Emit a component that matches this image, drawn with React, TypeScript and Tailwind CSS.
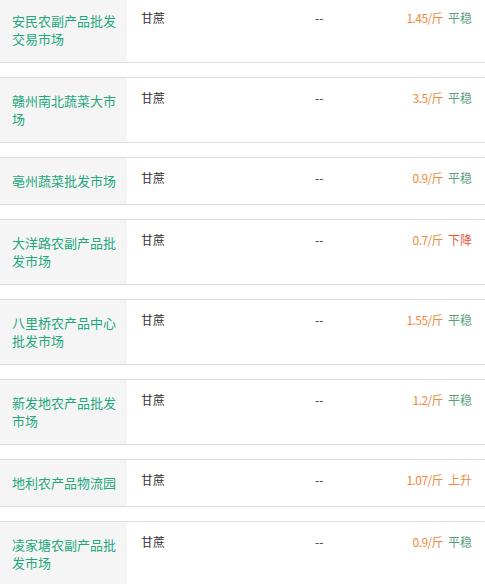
const rows = [
  { market: "安民农副产品批发交易市场", price: "1.45/斤", trend: "平稳" },
  { market: "赣州南北蔬菜大市场", price: "3.5/斤", trend: "平稳" },
  { market: "亳州蔬菜批发市场", price: "0.9/斤", trend: "平稳" },
  { market: "大洋路农副产品批发市场", price: "0.7/斤", trend: "下降" },
  { market: "八里桥农产品中心批发市场", price: "1.55/斤", trend: "平稳" },
  { market: "新发地农产品批发市场", price: "1.2/斤", trend: "平稳" },
  { market: "地利农产品物流园", price: "1.07/斤", trend: "上升" },
  { market: "凌家塘农副产品批发市场", price: "0.9/斤", trend: "平稳" },
];

const trendColor: Record<string, string> = {
  平稳: "text-[#5a9e80]",
  下降: "text-[#e05a3f]",
  上升: "text-[#f08a3c]",
};

export default function App() {
  return (
    <div
      className="w-[485px] h-[584px] overflow-hidden bg-white"
      style={{ fontFamily: '"Noto Sans CJK SC", "Noto Sans", sans-serif' }}
    >
      <div className="-mt-[3px] flex flex-col gap-[14px]">
        {rows.map((r) => (
          <div key={r.market} className="flex border-y border-[#dddddd]">
            <div className="w-[127px] shrink-0 bg-[#f5f5f5] pl-[12px] pr-[10px] pt-[14px] pb-[14px] text-[13px] leading-[18px] text-[#22a87c]">
              {r.market}
            </div>
            <div className="flex flex-1 items-start pl-[14px] pr-[13px] pt-[11px] text-[12px] leading-[18px]">
              <span className="w-[174px] text-[#333333]">甘蔗</span>
              <span className="text-[#333333]">--</span>
              <span className="ml-auto flex gap-[5px]">
                <span className="tracking-[-0.6px] text-[#f08a3c]">{r.price}</span>
                <span className={trendColor[r.trend]}>{r.trend}</span>
              </span>
            </div>
          </div>
        ))}
      </div>
    </div>
  );
}
